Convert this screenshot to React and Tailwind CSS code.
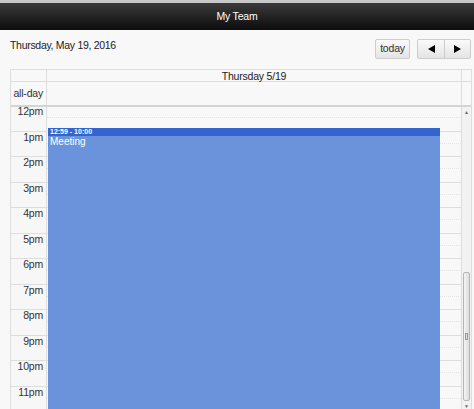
import React from 'react';

const hours = ['12pm', '1pm', '2pm', '3pm', '4pm', '5pm', '6pm', '7pm', '8pm', '9pm', '10pm', '11pm', ''];

function HourRow({ label }) {
  return (
    <div className="flex h-[25.5px]">
      <div className="w-[36px] shrink-0 whitespace-nowrap border-r border-t border-[#dddddd] bg-[#f7f7f7] pr-[3px] text-right text-[10.5px] leading-[11px] tracking-[-0.2px] text-[#333]">
        {label}
      </div>
      <div className="flex flex-1 flex-col border-t border-[#dddddd]">
        <div className="h-1/2 border-b border-dotted border-[#e4e4e4]"></div>
      </div>
    </div>
  );
}

function Tri({ dir }) {
  return (
    <svg width="7" height="8" viewBox="0 0 7 8">
      {dir === 'left' ? <polygon points="7,0 7,8 0,4" fill="#000" /> : <polygon points="0,0 0,8 7,4" fill="#000" />}
    </svg>
  );
}

export default function App() {
  return (
    <div className="h-[409px] w-[474px] overflow-hidden bg-[#f8f8f8] font-['Liberation_Sans',Arial,sans-serif] text-[#333]">
      <div className="h-[3px] bg-[#c9c9c9]"></div>
      <div className="flex h-[27px] items-center justify-center bg-gradient-to-b from-[#3b3b3b] to-[#0d0d0d] text-[10.5px] tracking-[-0.2px] text-white">
        My Team
      </div>

      <div className="flex items-start justify-between pl-[10px] pr-[3px] pt-[9px]">
        <div className="-mt-[1px] text-[10.5px] tracking-[-0.3px] text-[#222]">Thursday, May 19, 2016</div>
        <div className="flex gap-[7px]">
          <button className="h-[20px] w-[35px] rounded-[2px] border border-[#cccccc] bg-gradient-to-b from-[#fafafa] to-[#e4e4e4] text-[10.5px] tracking-[-0.2px] text-[#333]">
            today
          </button>
          <div className="flex">
            <button className="flex h-[20px] w-[28px] items-center justify-center rounded-l-[2px] border border-[#cccccc] bg-gradient-to-b from-[#fafafa] to-[#e4e4e4]">
              <Tri dir="left" />
            </button>
            <button className="-ml-px flex h-[20px] w-[27px] items-center justify-center rounded-r-[2px] border border-[#cccccc] bg-gradient-to-b from-[#fafafa] to-[#e4e4e4]">
              <Tri dir="right" />
            </button>
          </div>
        </div>
      </div>

      <div className="ml-[10px] mt-[10px] w-[462px] border-l border-r border-t border-[#dddddd]">
        <div className="flex h-[12px] border-b border-[#dddddd] text-[10.5px] leading-[12px] tracking-[-0.2px] text-[#222]">
          <div className="w-[36px] shrink-0 border-r border-[#dddddd]"></div>
          <div className="flex-1 text-center">Thursday 5/19</div>
          <div className="w-[10px] shrink-0 border-l border-[#dddddd]"></div>
        </div>
        <div className="flex h-[23px] text-[10.5px] tracking-[-0.2px] text-[#333]">
          <div className="flex w-[36px] shrink-0 items-center justify-end whitespace-nowrap border-r border-[#dddddd] pr-[3px]">all-day</div>
          <div className="flex-1"></div>
          <div className="w-[10px] shrink-0 border-l border-[#dddddd]"></div>
        </div>
        <div className="h-[2px] border-b border-t border-[#d4d4d4] bg-[#eeeeee]"></div>

        <div className="flex h-[305px] overflow-hidden">
          <div className="relative flex-1">
            <div className="-mt-[2px]">
              {hours.map((h, i) => (
                <HourRow key={i} label={h} />
              ))}
            </div>
            <div className="absolute left-[37px] top-[21px] h-[300px] w-[392px] bg-[#6b93dc]">
              <div className="h-[8px] bg-[#3465cf] pl-[2px] text-[7px] font-bold leading-[8px] text-white">12:59 - 10:00</div>
              <div className="pl-[2px] text-[10px] leading-[12px] text-white">Meeting</div>
            </div>
          </div>
          <div className="flex w-[10px] shrink-0 flex-col border-l border-[#dddddd] bg-[#f2f2f2]">
            <div className="flex h-[12px] items-center justify-center text-[5px] text-[#666]">▲</div>
            <div className="flex flex-1 flex-col justify-end">
              <div className="mx-auto flex h-[129px] w-[7px] items-center justify-center rounded-[2px] border border-[#b5b5b5] bg-gradient-to-r from-[#f4f4f4] to-[#dcdcdc]">
                <div className="h-[7px] w-[3px] border border-[#999] bg-[#ddd]"></div>
              </div>
            </div>
            <div className="flex h-[11px] items-center justify-center text-[5px] text-[#666]">▼</div>
          </div>
        </div>
      </div>
    </div>
  );
}
